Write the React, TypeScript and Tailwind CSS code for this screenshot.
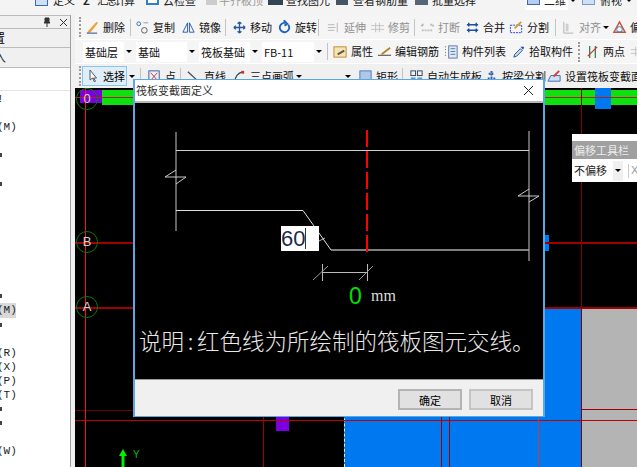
import type { ReactNode } from "react";

const Caret = ({ className = "" }: { className?: string }) => (
  <span className={`w-0 h-0 border-x-[3px] border-x-transparent border-t-[3px] border-t-black shrink-0 ${className}`} />
);

const Sep = ({ className = "" }: { className?: string }) => (
  <span className={`w-px h-[17px] bg-[#c4c4c4] shrink-0 ${className}`} />
);

const Grip = ({ className = "" }: { className?: string }) => (
  <span className={`w-[2px] h-[20px] border-l-2 border-dotted border-[#9a9a9a] shrink-0 ${className}`} />
);

function Tool({ icon, label, className = "", muted = false }: { icon: ReactNode; label?: string; className?: string; muted?: boolean }) {
  return (
    <div className={`flex items-center shrink-0 ${className}`}>
      <svg width="15" height="15" viewBox="0 0 16 16" fill="none" className="shrink-0">{icon}</svg>
      {label && <span className={`ml-[3px] whitespace-nowrap ${muted ? "text-[#8f8f8f]" : "text-[#111]"}`}>{label}</span>}
    </div>
  );
}

function Combo({ label, className = "" }: { label: string; className?: string }) {
  return (
    <div className={`flex items-center h-[20px] shrink-0 ${className}`}>
      <span className="bg-white h-full flex-1 pl-[2px] leading-[20px] whitespace-nowrap text-[#111]">{label}</span>
      <span className="w-[9px] flex justify-center"><Caret /></span>
    </div>
  );
}

const brush = <><path d="M2 14l4-1 8-10-2-1-8 9z" fill="#e9a53c" /><path d="M2 14h11" stroke="#28408c" /></>;
const copy = <><circle cx="4" cy="4" r="2" stroke="#2d6cb5" /><circle cx="10" cy="11" r="3" stroke="#555" /><path d="M9 3h5" stroke="#999" /></>;
const mirror = <><path d="M7 3L2 13h5zM9 3l5 10H9z" stroke="#2a5aa8" /></>;
const move = <path d="M8 2v12M2 8h12M8 2L6 4M8 2l2 2M8 14l-2-2M8 14l2-2M2 8l2-2M2 8l2 2M14 8l-2-2M14 8l-2 2" stroke="#27589c" strokeWidth="1.4" />;
const rotate = <path d="M12 5a5 5 0 1 1-4-2V1l3 3-3 2" stroke="#1d64c0" strokeWidth="2" />;
const extend = <path d="M2 8h8M2 5h7M2 11h7M12 3v10" stroke="#b5b5b5" />;
const trim = <path d="M1 6h14M1 10h14M6 3v10M10 3v10" stroke="#c2c2c2" />;
const breakIcon = <path d="M2 5h3M11 5h3M2 11h12M2 5v2M14 5v2" stroke="#bcbcbc" strokeWidth="2" strokeDasharray="2 1" />;
const merge = <path d="M2 5h12M2 11h12M4 3v4M12 3v4M4 9v4M12 9v4" stroke="#1e4f9c" strokeWidth="1.6" />;
const split = <><rect x="1.5" y="5.5" width="12" height="8" stroke="#1b3fd0" strokeDasharray="2 1" /><path d="M6 9l7-7" stroke="#d89a2c" strokeWidth="2" /></>;
const align = <><path d="M3 2v12h10" stroke="#b0b0b0" /><rect x="5" y="4" width="3" height="8" fill="#cfcfcf" /></>;
const warn = <><path d="M8 2l6 11H2z" stroke="#c8503c" strokeWidth="1.5" /><circle cx="8" cy="10" r="3" stroke="#3a7ab8" /></>;
const props = <><rect x="1" y="3" width="13" height="11" fill="#f6e3b0" stroke="#c08a30" /><path d="M5 11l7-4" stroke="#555" strokeWidth="2" /></>;
const edit = <><path d="M1 12h14" stroke="#333" /><path d="M5 11l9-7" stroke="#b9822a" strokeWidth="2" /></>;
const list = <><rect x="5" y="2" width="9" height="13" fill="#dfeaf6" stroke="#5878a8" /><path d="M1 3h2M1 6h2M1 9h2M1 12h2" stroke="#555" strokeDasharray="1 1" /><path d="M7 5h5M7 8h5M7 11h5" stroke="#5878a8" /></>;
const picker = <><path d="M3 14l1-3 6-6 2 2-6 6z" fill="#cde" stroke="#1d4f9c" /><path d="M10 3l3 3 1-3z" fill="#1d4f9c" /></>;
const twoPoints = <><path d="M5 2v13M11 2v13" stroke="#2b7a48" strokeWidth="1.3" /><path d="M3 13L13 3" stroke="#d03030" strokeWidth="1.3" /></>;
const point = <><rect x="2" y="2" width="11" height="12" stroke="#2a5aa8" /><path d="M4 4l7 8M11 4l-7 8" stroke="#d03030" /></>;
const line = <path d="M2 3l12 11" stroke="#446" strokeWidth="1.3" />;
const arc = <><path d="M3 14C3 8 7 4 11 3" stroke="#345" strokeWidth="1.3" /><rect x="10" y="2" width="3" height="3" fill="#d03030" /></>;
const rect = <rect x="2" y="2" width="12" height="12" fill="#aec8ea" stroke="#4c78b8" />;
const auto = <><rect x="2" y="2" width="5" height="5" stroke="#345" /><rect x="9" y="2" width="5" height="5" stroke="#345" /><rect x="2" y="9" width="5" height="5" fill="#6a94c8" /><rect x="9" y="9" width="5" height="5" fill="#6a94c8" /></>;
const beam = <path d="M2 13h12M4 10h8M8 2v8M5 5h6" stroke="#2a5aa8" strokeWidth="2" strokeDasharray="2 1" />;
const section = <><path d="M1 13l3-6h10v6z" fill="#cfe0f4" stroke="#3a6ab0" /><path d="M7 8l6-6" stroke="#d83c3c" strokeWidth="2" /></>;

// tree rows of the clipped side panel, one per 14px line; "|" is a glyph end cut by the edge
const sideRows = ["!", "", "(M)", "", "|", "", "|", "", "", "", "", "", "", "", "|", "(M)", "|", "", "(R)", "(X)", "(P)", "(T)", "|", "|", "", "(W)"];

const bubbles = [
  { t: "0", c: "top-0" },
  { t: "B", c: "top-[143px]" },
  { t: "A", c: "top-[208px]" },
];

export default function App() {
  return (
    <div className="relative w-[637px] h-[467px] overflow-hidden flex flex-col bg-[#f0f0f0] text-[11px] font-['Noto_Sans_CJK_SC','Liberation_Sans',sans-serif]">
      {/* top menu, cut off by the window edge */}
      <div className="h-[15px] shrink-0 overflow-hidden bg-[#f4f4f4]">
        <div className="flex items-center h-0 whitespace-nowrap pl-[35px] leading-[13px] text-[#222]">
          <span className="w-[13px] h-[12px] shrink-0 bg-[#cfe0f4] border border-[#3a6ab0]" />
          <span className="ml-[5px]">定义</span>
          <span className="ml-[8px] w-[8px] font-bold">Σ</span>
          <span className="ml-[6px] w-[36px] tracking-[-2px]">汇总计算</span>
          <span className="ml-[13px] w-[13px] h-[10px] shrink-0 border-2 border-[#2d80c8] bg-white" />
          <span className="ml-[4px]">云检查</span>
          <span className="ml-[10px] w-[11px] h-[10px] shrink-0 bg-[#ccc]" />
          <span className="ml-[2px] text-[#999]">平齐板顶</span>
          <span className="ml-[5px] w-[15px] h-[10px] shrink-0 bg-[#345]" />
          <span className="ml-[3px]">查找图元</span>
          <span className="ml-[6px] w-[12px] h-[10px] shrink-0 bg-[#456]" />
          <span className="ml-[5px]">查看钢筋量</span>
          <span className="ml-[7px] w-[13px] h-[10px] shrink-0 bg-[#567]" />
          <span className="ml-[4px]">批量选择</span>
          <span className="ml-[49px] w-[43px] h-[20px] shrink-0 bg-white flex items-center">
            <span className="w-[13px] h-[10px] bg-[#b4cdf0] border border-[#3a6ab0] ml-[2px]" />
            <span className="ml-[4px]">二维</span>
          </span>
          <Caret className="ml-[2px]" />
          <span className="w-[13px] h-[10px] shrink-0 bg-[#cfe0f4] border border-[#7a9ac8] ml-[6px]" />
          <span className="ml-[5px]">俯视</span>
          <Caret className="ml-[4px]" />
        </div>
      </div>

      <div className="flex-1 min-h-0 flex">
        {/* left panel */}
        <div className="w-[71px] shrink-0 flex flex-col border-r border-[#a0a0a0] bg-white h-full overflow-hidden">
          <div className="h-[13px] bg-[#f0f0f0] border-t border-[#bbb] flex items-center justify-end gap-[7px] pr-[2px] shrink-0">
            <svg width="10" height="10" viewBox="0 0 10 10"><path d="M3 1h4v4l1 1H2l1-1zM5 6v4" fill="#333" stroke="#333" /></svg>
            <svg width="9" height="9" viewBox="0 0 9 9"><path d="M1 1l7 7M8 1L1 8" stroke="#333" /></svg>
          </div>
          <div className="h-[20px] shrink-0 bg-[#f0f0f0] border-y border-[#bbb] text-[12px] leading-[18px] overflow-hidden"><span className="block -ml-[7px]">置</span></div>
          <div className="h-[20px] shrink-0 bg-[#f0f0f0] border-b border-[#bbb] text-[12px] leading-[18px] overflow-hidden text-[#333]"><span className="block -ml-[6px]">入</span></div>
          <div className="h-[23px] shrink-0 border-b border-[#e4e4e4]" />
          <div className="pt-[1px]">
            {sideRows.map((row, i) => (
              <div key={i} className="h-[14.100px] flex items-center">
                {row === "|" ? (
                  <span className="w-[2px] h-[4px] bg-[#444]" />
                ) : row ? (
                  <div className={`w-[16px] h-full overflow-hidden ${i === 15 ? "bg-[#d9d9d9]" : ""}`}>
                    <span className={`block text-[11px] leading-[14px] text-[#222] font-['Liberation_Mono',monospace] ${row === "!" ? "-ml-[3px]" : "-ml-[3px]"}`}>{row}</span>
                  </div>
                ) : null}
              </div>
            ))}
          </div>
        </div>

        <div className="flex-1 min-w-0 flex flex-col pl-[4px]">
          {/* toolbars */}
          <div className="h-[24px] shrink-0 flex items-center bg-[#f5f5f5] pl-[4px] overflow-hidden">
            <Grip />
            <Tool icon={brush} label="删除" className="ml-[4px]" />
            <Sep className="ml-[5px]" />
            <Tool icon={copy} label="复制" className="ml-[4px]" />
            <Tool icon={mirror} label="镜像" className="ml-[6px]" />
            <Sep className="ml-[4px]" />
            <Tool icon={move} label="移动" className="ml-[6px]" />
            <Tool icon={rotate} label="旋转" className="ml-[5px]" />
            <Sep className="ml-[1px]" />
            <Tool icon={extend} label="延伸" muted className="ml-[7px]" />
            <Tool icon={trim} label="修剪" muted className="ml-[4px]" />
            <Sep className="ml-[4px]" />
            <Tool icon={breakIcon} label="打断" muted className="ml-[5px]" />
            <Tool icon={merge} label="合并" className="ml-[5px]" />
            <Tool icon={split} label="分割" className="ml-[4px]" />
            <Sep className="ml-[6px]" />
            <Tool icon={align} label="对齐" muted className="ml-[5px]" />
            <Caret className="ml-[2px]" />
            <Tool icon={warn} label="偏" className="ml-[3px]" />
          </div>
          <div className="h-px shrink-0 bg-white" />
          <div className="h-[23px] shrink-0 flex items-center bg-[#f5f5f5] pl-[8px] overflow-hidden">
            <Combo label="基础层" className="w-[50px]" />
            <Combo label="基础" className="w-[60px] ml-[3px]" />
            <Combo label="筏板基础" className="w-[60px] ml-[3px]" />
            <Combo label="FB-11" className="w-[61px] ml-[3px]" />
            <Sep className="ml-[4px]" />
            <Tool icon={props} label="属性" className="ml-[5px]" />
            <Tool icon={edit} label="编辑钢筋" className="ml-[4px]" />
            <Tool icon={list} label="构件列表" className="ml-[5px]" />
            <Tool icon={picker} label="拾取构件" className="ml-[5px]" />
            <Grip className="ml-[5px]" />
            <Tool icon={twoPoints} label="两点" className="ml-[5px]" />
            <Tool icon={trim} className="ml-[5px]" />
          </div>
          <div className="h-px shrink-0 bg-white" />
          <div className="h-[24px] shrink-0 flex items-center bg-[#f0f0f0] pl-[4px] overflow-hidden">
            <Grip />
            <div className="ml-px w-[45px] h-[20px] bg-[#e0eef9] border border-[#8cc4f0] flex items-center shrink-0">
              <svg width="12" height="14" viewBox="0 0 12 14" className="ml-[4px]"><path d="M3 1v10l2.500-2 2 4 1-1-2-3h3z" fill="#fff" stroke="#556" /></svg>
              <span className="ml-[4px] whitespace-nowrap">选择</span>
            </div>
            <Caret className="ml-[2px]" />
            <Sep className="ml-[5px]" />
            <Tool icon={point} label="点" className="ml-[6px]" />
            <Sep className="ml-[4px]" />
            <Tool icon={line} label="直线" className="ml-[5px]" />
            <Tool icon={arc} label="三点画弧" className="ml-[6px]" />
            <Caret className="ml-[2px]" />
            <Caret className="ml-[43px]" />
            <Tool icon={rect} label="矩形" className="ml-[7px]" />
            <Sep className="ml-[4px]" />
            <Tool icon={auto} label="自动生成板" className="ml-[6px]" />
            <Tool icon={beam} label="按梁分割" className="ml-[2px]" />
            <Tool icon={section} label="设置筏板变截面" className="ml-[1px]" />
          </div>

          {/* drawing canvas */}
          <div className="flex-1 min-h-0 relative bg-black overflow-hidden">
            <div className="absolute left-[27px] right-0 top-[2px] h-[15px] bg-[#10e010]" />
            <div className="absolute left-[5px] top-[2px] w-[22px] h-[13px] bg-[#7a00e0]" />
            <div className="absolute left-[520px] top-0 w-[16px] h-[21px] bg-[#0078f0]" />
            <div className="absolute left-[269px] top-[219px] w-[238px] h-[160px] bg-[#0078f0] border-x border-t border-dashed border-[#e8e8ff]" />
            <div className="absolute left-[507px] top-[219px] w-[60px] h-[160px] bg-[#b4b4b4]" />
            <div className="absolute left-[470px] top-[147px] w-[4px] h-[16px] bg-[#0078f0]" />
            <div className="absolute left-[201px] top-[329px] w-[13px] h-[14px] bg-[#7a00e0]" />

            {/* grid lines */}
            <div className="absolute left-0 right-0 top-[9px] h-px bg-[#b02020]" />
            <div className="absolute left-0 right-0 top-[154px] h-[2px] bg-[#a00000]" />
            <div className="absolute left-0 right-0 top-[219px] h-[2px] bg-[#a00000]" />
            <div className="absolute left-[507px] right-0 top-[321px] h-px bg-[#a00000]" />
            <div className="absolute left-0 w-[59px] top-[322px] h-px bg-[#6a0000]" />
            <div className="absolute left-0 right-0 top-[332px] h-px bg-[#c00000]" />
            <div className="absolute left-[10px] top-0 bottom-0 w-px bg-[#ff1010]" />
            <div className="absolute left-[188px] top-[329px] bottom-0 w-px bg-[#a00000]" />
            <div className="absolute left-[366px] top-[329px] bottom-0 w-px bg-[#a00000]" />
            <div className="absolute left-[374px] top-[329px] bottom-0 w-px bg-[#a00000]" />
            <div className="absolute left-[463px] top-[219px] bottom-0 w-px bg-[#c04040]" />
            <div className="absolute left-[506px] top-0 bottom-0 w-px bg-[#8a0000]" />

            {/* axis bubbles */}
            {bubbles.map((b) => (
              <div key={b.t} className={`absolute left-[1px] w-[22px] h-[22px] rounded-full border border-[#0a7a0a] flex items-center justify-center text-[#d0d0d0] text-[13px] font-['Liberation_Sans',sans-serif] ${b.c}`}>
                {b.t}
              </div>
            ))}

            <svg width="20" height="20" viewBox="0 0 20 20" className="absolute left-[38px] top-[361px]">
              <path d="M10 0l4 7h-2.500v13h-3V7H6z" fill="#00f000" />
            </svg>
            <span className="absolute left-[58px] top-[360px] text-[#00c000] text-[10px] leading-[14px] font-['Liberation_Sans',sans-serif]">Y</span>

            {/* offset toolbar */}
            <div className="absolute left-[497px] top-[46px] w-[70px] h-[48px] bg-white">
              <div className="mt-[7px] h-[18px] bg-[#a0a0a0] text-[#ececec] leading-[18px] pl-[2px] whitespace-nowrap">偏移工具栏</div>
              <div className="h-[23px] flex items-center">
                <span className="pl-[2px] w-[41px] whitespace-nowrap text-[#222]">不偏移</span>
                <span className="w-[10px] h-[20px] bg-[#f0f0f0] flex items-center justify-center"><Caret /></span>
                <span className="ml-[5px] w-px h-[14px] bg-[#ccc]" />
                <span className="ml-[2px] text-[#999] font-['Liberation_Sans',sans-serif]">X</span>
              </div>
            </div>
          </div>
        </div>
      </div>

      {/* section dialog */}
      <div className="absolute left-[133px] top-[79px] w-[412px] h-[338px] border-x-2 border-t border-b border-[#5aa8e0] bg-white flex flex-col">
        <div className="h-[23px] shrink-0 flex items-center justify-between bg-white pl-[1px] pr-[9px] text-[#333] border-b-2 border-[#b8b8b8]">
          <span>筏板变截面定义</span>
          <svg width="11" height="11" viewBox="0 0 11 11"><path d="M1 1l9 9M10 1l-9 9" stroke="#222" /></svg>
        </div>
        <div className="flex-1 min-h-0 relative bg-black overflow-hidden">
          <svg width="408" height="276" viewBox="135 103 408 276" className="absolute inset-0" fill="none">
            <path d="M176 132V231M529 131V261" stroke="#999" strokeWidth="1.300" />
            <path d="M176 150.500H529" stroke="#d0d0d0" />
            <path d="M176 210.500H303L331 250" stroke="#e0e0e0" />
            <path d="M331 250H529" stroke="#aaa" strokeWidth="1.300" />
            <path d="M319 241L325 238" stroke="#ccc" strokeWidth="0.900" />
            <path d="M176 170L165 177H186L176 184M529 189L518 196H539L529 202" stroke="#ddd" strokeWidth="0.900" />
            <path d="M367 130V252" stroke="#ff0000" strokeWidth="2" strokeDasharray="17 4" />
            <path d="M322.500 264V281M367.500 264V281M322 272.500H367" stroke="#bbb" />
            <path d="M313 280L328 266M359 280L373 266" stroke="#999" />
          </svg>
          <div className="absolute left-[146px] top-[123px] w-[38px] h-[25px] bg-white flex items-center text-[22px] leading-[25px] text-[#1a2a50] font-['Liberation_Sans',sans-serif]">
            <span>60</span>
            <span className="w-px h-[21px] bg-[#333]" />
          </div>
          <span className="absolute left-[214px] top-[180px] text-[23px] leading-[26px] text-[#00e000] font-['Liberation_Sans',sans-serif]">0</span>
          <span className="absolute left-[236px] top-[183px] text-[16px] leading-[20px] text-[#ddd] font-['Liberation_Serif',serif]">mm</span>
          <p className="absolute left-[4px] top-[222px] text-[22.500px] leading-[30px] whitespace-nowrap text-[#e8e8e8] font-light font-['Noto_Sans_CJK_SC',serif]">
            说明<span className="inline-block w-[13px] text-center">:</span>红色线为所绘制的筏板图元交线。
          </p>
        </div>
        <div className="h-[37px] shrink-0 bg-[#f0f0f0] flex items-start justify-end gap-[7px] pr-[10px] pt-[9px] border-t border-[#999]">
          <button className="w-[64px] h-[21px] bg-[#e1e1e1] border-2 border-[#b4b4b4] leading-[16px] text-black">确定</button>
          <button className="w-[64px] h-[21px] bg-[#e1e1e1] border-2 border-[#c4c4c4] leading-[16px] text-black">取消</button>
        </div>
      </div>
    </div>
  );
}
